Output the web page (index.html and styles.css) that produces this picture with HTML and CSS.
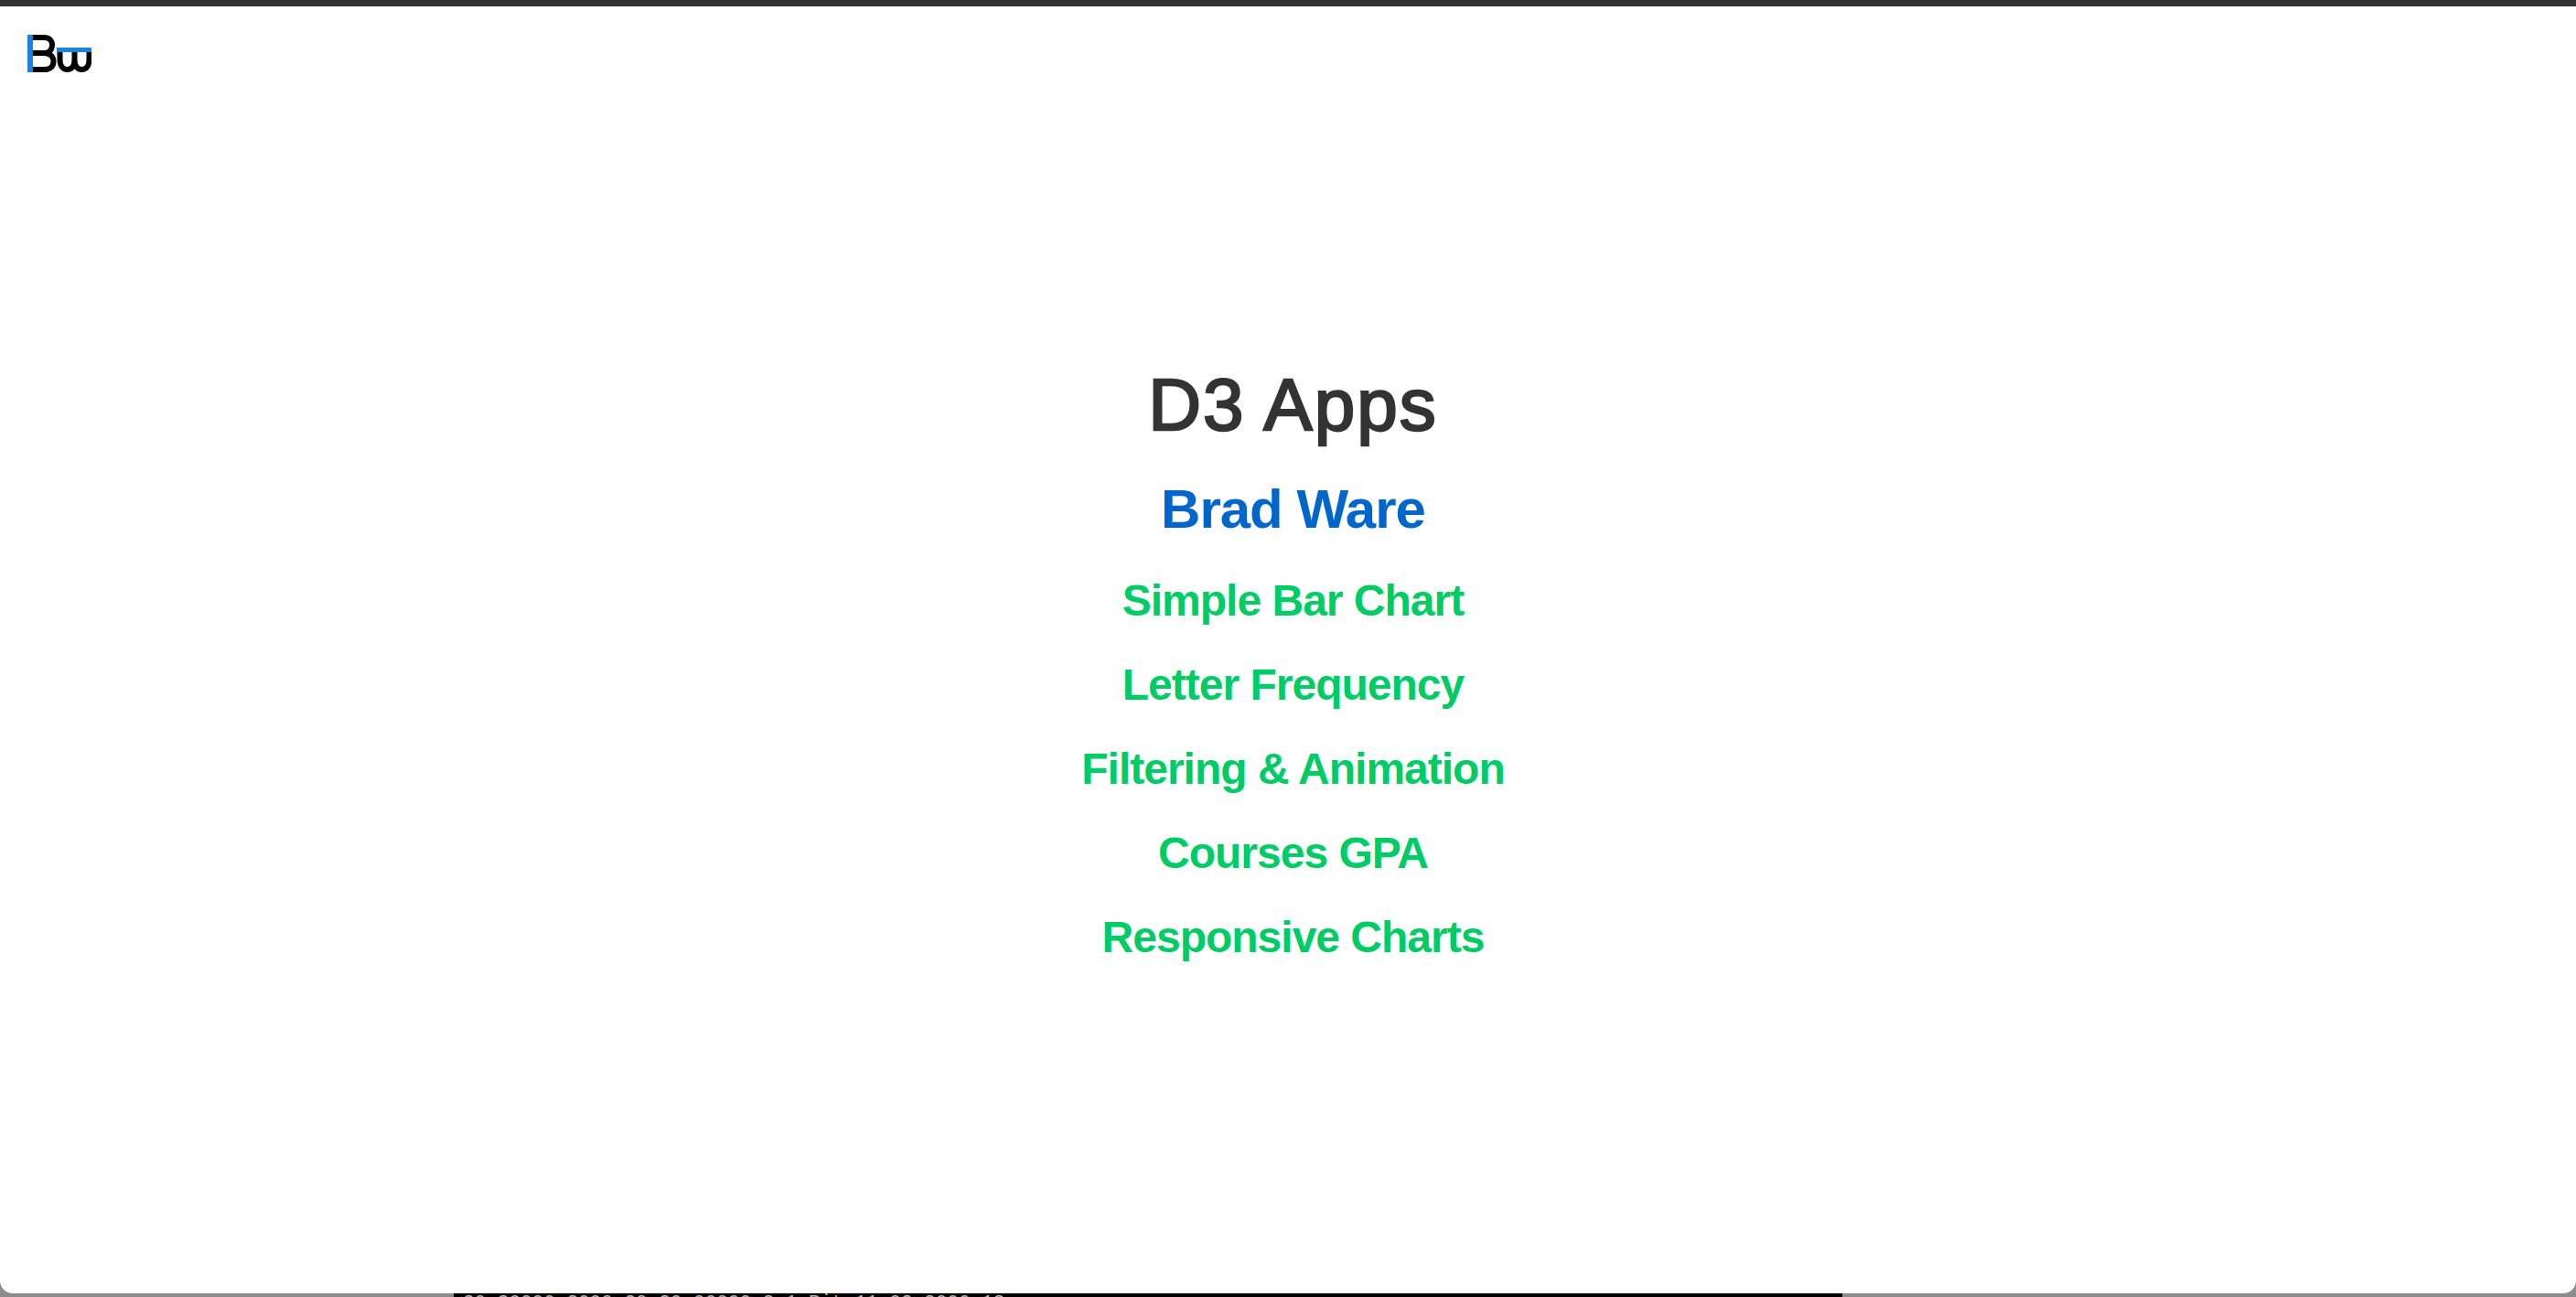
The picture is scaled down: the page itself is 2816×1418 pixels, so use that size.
FILE: index.html
```html
<!DOCTYPE html>
<html lang="en">
<head>
    <meta charset="UTF-8">
    <meta name="viewport" content="width=device-width, initial-scale=1.0">
    <title>D3 Apps</title>
    <link rel="stylesheet" href="styles.css">
</head>
<body>

<div class="topBar"></div>

<div class="appWindow">
    <header class="siteHeader">
        <a class="logo" href="#">
            <svg width="70" height="41" viewBox="0 0 70 41" fill="none">
                <path d="M6 3H18C24 3 27 6.500 27 11C27 16 24 20 18 20H6M18 20C25 20 28.500 24 28.500 29.500C28.500 34.500 25 38 18 38H6" stroke="#000" stroke-width="6"/>
                <rect x="0" y="0" width="6" height="41" fill="#1a82e2"/>
                <path d="M35.500 15V27C35.500 34 39 38 43.500 38C48.500 38 51.500 34 51.500 27V15M51.500 27C51.500 34 54.500 38 59.500 38C64 38 67.500 34 67.500 27V15" stroke="#000" stroke-width="6"/>
                <rect x="32" y="14" width="38" height="5" fill="#1a82e2"/>
            </svg>
        </a>
    </header>

    <main class="content">
        <h1>D3 Apps</h1>
        <h2><a href="#">Brad Ware</a></h2>
        <nav class="appLinks">
            <a href="#">Simple Bar Chart</a>
            <a href="#">Letter Frequency</a>
            <a href="#">Filtering &amp; Animation</a>
            <a href="#">Courses GPA</a>
            <a href="#">Responsive Charts</a>
        </nav>
    </main>
</div>

<div class="desktopStrip">
    <div class="terminal">20 20000 2000-20 20:00000:2 1 Bit 11 02 2000:12</div>
</div>

</body>
</html>
```

FILE: styles.css
```css
html, body {
    height: 100%;
}

body {
    margin: 0;
    display: flex;
    flex-direction: column;
    overflow: hidden;
    font-family: 'Liberation Sans', Arial, sans-serif;
    background: linear-gradient(#5a5a5a, #8c8c8c 40%);
}

a {
    text-decoration: none;
}

.topBar {
    height: 7px;
    background-color: #333;
}

.appWindow {
    flex: 1;
    display: flex;
    flex-direction: column;
    background-color: #fff;
    border-radius: 0 0 14px 14px;
}

.siteHeader {
    display: flex;
    padding: 31px 30px 0;
}

.logo {
    display: block;
    height: 41px;
}

.logo svg {
    display: block;
}

.content {
    display: flex;
    flex-direction: column;
    align-items: center;
    text-align: center;
    margin-top: 318px;
    padding-left: 11px;
}

h1 {
    margin: 0;
    font-size: 80px;
    line-height: 92px;
    font-weight: normal;
    letter-spacing: 2px;
    color: #333;
    -webkit-text-stroke: 2.4px #333;
}

h2 {
    margin: 33px 0 0;
    font-size: 60px;
    line-height: 70px;
    font-weight: bold;
    letter-spacing: -1px;
}

h2 a {
    color: #0066cc;
}

.appLinks {
    display: flex;
    flex-direction: column;
    margin-top: 19px;
}

.appLinks a {
    font-size: 48px;
    line-height: 92px;
    font-weight: bold;
    letter-spacing: -1px;
    color: #00cc66;
}

.desktopStrip {
    flex: none;
    height: 4px;
    display: flex;
    padding-left: 496px;
}

.terminal {
    width: 1518px;
    padding-left: 10px;
    box-sizing: border-box;
    overflow: hidden;
    background-color: #000;
    color: #bbb;
    font-family: 'Liberation Mono', monospace;
    font-size: 21px;
    line-height: 20px;
    white-space: pre;
}
```
